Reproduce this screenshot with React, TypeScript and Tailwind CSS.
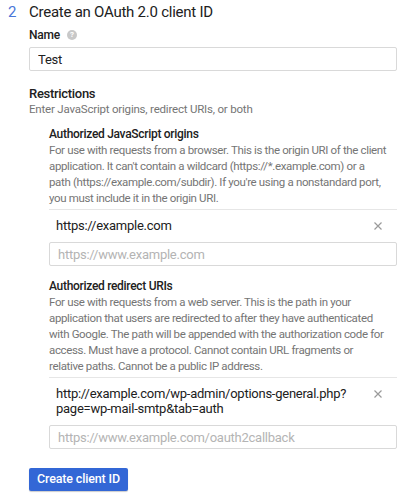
import { useState } from 'react';

function RemoveIcon() {
  return (
    <svg viewBox="0 0 8 8" className="w-[8px] h-[8px]" fill="none" stroke="#9a9a9a" strokeWidth={1.2}>
      <path d="M0.5 0.5l7 7M7.5 0.5l-7 7" />
    </svg>
  );
}

function UriList({ title, help, items, placeholder }: { title: string; help: string[]; items: string[][]; placeholder: string }) {
  const [value, setValue] = useState('');
  return (
    <div>
      <div className="text-[12px] leading-[15px] font-medium tracking-[-0.3px] text-[#212121]">{title}</div>
      <div className="text-[11.5px] leading-[16px] tracking-[-0.35px] text-[#757575] mb-[3px]">
        {help.map((line) => (
          <div key={line} className="whitespace-nowrap">{line}</div>
        ))}
      </div>
      {items.map((lines, i) => (
        <div key={i} className="flex items-start border-t border-[#e6e6e6] pt-[8px] pb-[9px]">
          <div className="flex-1 pl-[7px] text-[13px] leading-[15px] tracking-[-0.25px] text-[#212121]">
            {lines.map((l) => (
              <div key={l}>{l}</div>
            ))}
          </div>
          <button className="h-[15px] mr-[15px] flex items-center">
            <RemoveIcon />
          </button>
        </div>
      ))}
      <input
        value={value}
        onChange={(e) => setValue(e.target.value)}
        placeholder={placeholder}
        className="block w-full h-[24px] border border-[#d9d9d9] rounded-[2px] pl-[8px] text-[13px] tracking-[-0.25px] text-[#212121] placeholder:text-[#b4b4b4] outline-none"
      />
    </div>
  );
}

export default function App() {
  const [name, setName] = useState('Test');

  return (
    <div className="w-[411px] h-[497px] bg-white font-['Roboto',sans-serif] overflow-hidden">
      <div className="flex h-[24px] items-center">
        <span className="w-[29px] pl-[8px] text-[15px] text-[#4a76d8]">2</span>
        <h1 className="text-[15px] tracking-[-0.25px] text-[#212121]">Create an OAuth 2.0 client ID</h1>
      </div>

      <div className="pl-[29px] pr-[14px]">
        <div className="mt-[3px] flex items-center gap-[7px] h-[16px]">
          <label className="text-[12px] font-medium tracking-[-0.2px] text-[#212121]">Name</label>
          <span className="w-[10px] h-[10px] rounded-full bg-[#c8c8c8] text-white text-[8px] font-bold leading-none flex items-center justify-center">?</span>
        </div>
        <input
          value={name}
          onChange={(e) => setName(e.target.value)}
          className="mt-[4px] block w-full h-[24px] border border-[#d9d9d9] rounded-[2px] pl-[8px] text-[13px] tracking-[-0.25px] text-[#212121] outline-none"
        />

        <div className="mt-[15px] text-[13px] leading-[16px] font-medium tracking-[-0.3px] text-[#212121]">Restrictions</div>
        <div className="text-[11.5px] leading-[14px] tracking-[-0.2px] text-[#757575]">Enter JavaScript origins, redirect URIs, or both</div>

        <div className="pl-[20px]">
          <div className="mt-[11px]">
            <UriList
              title="Authorized JavaScript origins"
              help={[
                'For use with requests from a browser. This is the origin URI of the client',
                "application. It can't contain a wildcard (https://*.example.com) or a",
                "path (https://example.com/subdir). If you're using a nonstandard port,",
                'you must include it in the origin URI.',
              ]}
              items={[['https://example.com']]}
              placeholder="https://www.example.com"
            />
          </div>
          <div className="mt-[13px]">
            <UriList
              title="Authorized redirect URIs"
              help={[
                'For use with requests from a web server. This is the path in your',
                'application that users are redirected to after they have authenticated',
                'with Google. The path will be appended with the authorization code for',
                'access. Must have a protocol. Cannot contain URL fragments or',
                'relative paths. Cannot be a public IP address.',
              ]}
              items={[['http://example.com/wp-admin/options-general.php?', 'page=wp-mail-smtp&tab=auth']]}
              placeholder="https://www.example.com/oauth2callback"
            />
          </div>
        </div>

        <button className="mt-[19px] h-[23px] px-[8px] bg-[#3367d6] rounded-[2px] text-white text-[12.5px] font-medium tracking-[-0.15px] leading-none shadow-[0_1px_1px_rgba(0,0,0,0.2)]">
          Create client ID
        </button>
      </div>
    </div>
  );
}
